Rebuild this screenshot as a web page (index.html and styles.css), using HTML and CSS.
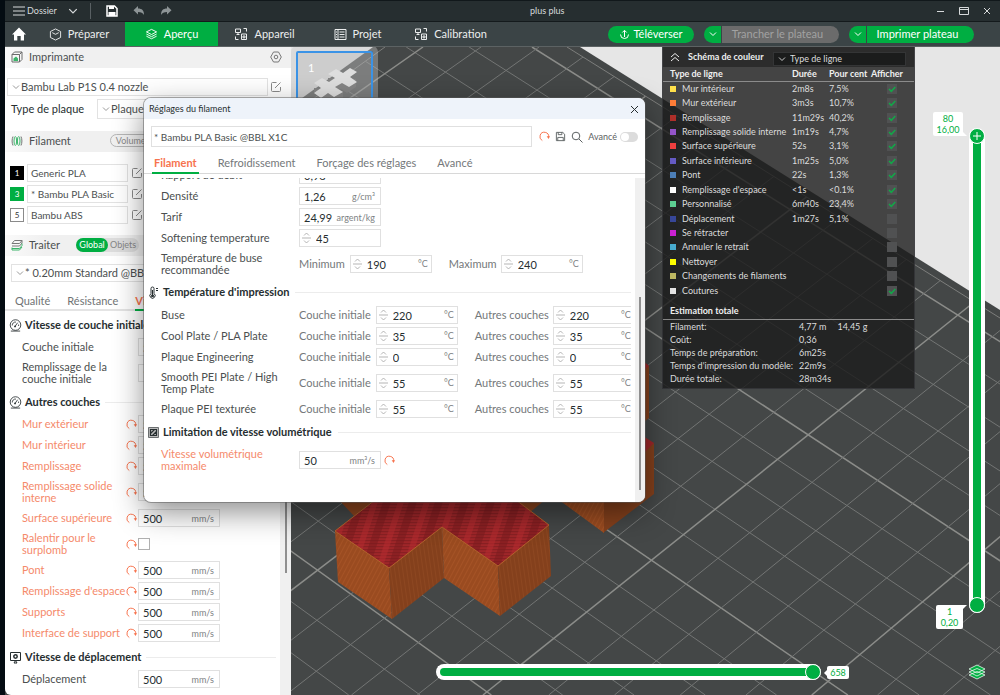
FILE: index.html
```html
<!DOCTYPE html>
<html lang="fr">
<head>
<meta charset="utf-8">
<meta name="viewport" content="width=device-width, initial-scale=1">
<title>plus plus</title>
<link rel="stylesheet" href="styles.css">
</head>
<body>
<svg class="defs" aria-hidden="true">
  <symbol id="chev" viewBox="0 0 8 8"><path d="M1 2.5 4 5.5 7 2.5" fill="none" stroke="currentColor"/></symbol>
  <symbol id="undo" viewBox="0 0 10 10"><path d="M3 8.700A4 4 0 1 1 8.800 5.500" fill="none" stroke="currentColor" stroke-width=".9"/><path d="M7 4.800h3L8.700 7.300z" fill="currentColor"/></symbol>
  <symbol id="edit" viewBox="0 0 12 12"><path d="M6.5 1.5H2.5a1 1 0 0 0-1 1v7a1 1 0 0 0 1 1h7a1 1 0 0 0 1-1V6M5 7l5.5-5.5" fill="none" stroke="currentColor"/></symbol>
  <symbol id="spin" viewBox="0 0 9 14"><path d="M2 4.500 4.500 2 7 4.500M2 9.500 4.500 12 7 9.500M0 7h9" fill="none" stroke="currentColor" stroke-width=".8"/></symbol>
  <symbol id="gauge" viewBox="0 0 14 14"><circle cx="7" cy="6.500" r="5.700" fill="none" stroke="currentColor" stroke-width=".9"/><path d="M6.500 8 9.300 4M3.500 7a3.500 3.500 0 0 1 4-3.700M10.300 6v1.500M2 13h10" fill="none" stroke="currentColor" stroke-width=".9"/><circle cx="6.500" cy="8" r="1" fill="currentColor"/></symbol>
  <symbol id="layers" viewBox="0 0 14 14"><path d="M7 1.500 12.500 4.200 7 7 1.500 4.200zM1.500 6.500 7 9.300l5.500-2.800M1.500 8.800 7 11.600l5.500-2.800" fill="none" stroke="currentColor"/></symbol>
  <symbol id="device" viewBox="0 0 14 14"><path d="M1.500 2h5v3.500h-5zM4 5.500V7.500M2.500 7.500h3M9.500 1.500h3v3M1.500 9.500v3h3M7.500 7h5v5.500h-5zM9 9h2v1.800H9z" fill="none" stroke="currentColor"/></symbol>
  <symbol id="disk" viewBox="0 0 12 12"><path d="M1.500 1.500h7l2 2v7h-9zM3.500 1.500v2.500h4V1.500M3 10.500V7h6v3.500" fill="none" stroke="currentColor"/></symbol>
</svg>

<div class="window">
  <header class="titlebar">
    <button class="menu-btn"><svg width="12" height="12" viewBox="0 0 12 12"><path d="M0 2h12M0 6h12M0 10h12" stroke="currentColor"/></svg>Dossier</button>
    <button class="icon-btn" aria-label="Menu"><svg width="10" height="10"><use href="#chev"/></svg></button>
    <span class="divider"></span>
    <button class="icon-btn save" aria-label="Enregistrer"><svg width="12" height="12" viewBox="0 0 12 12"><path d="M1 1h7.500L11 3.500V11H1z" fill="none" stroke="currentColor" stroke-width="1.500"/><path d="M3 1h5v3H3zM2.500 7h7v4h-7z" fill="currentColor"/></svg></button>
    <button class="icon-btn dim" aria-label="Annuler"><svg width="12" height="12" viewBox="0 0 12 12"><path d="M5 1v2.500c4 0 6 2 6 6.500C10 8 8 7 5 7v2.500L.5 5.200z" fill="currentColor"/></svg></button>
    <button class="icon-btn dim" aria-label="Rétablir"><svg width="12" height="12" viewBox="0 0 12 12"><path d="M7 1v2.500c-4 0-6 2-6 6.500C2 8 4 7 7 7v2.500l4.500-4.300z" fill="currentColor"/></svg></button>
    <h1 class="doc-title">plus plus</h1>
    <div class="win-btns">
      <button class="icon-btn" aria-label="Réduire"><svg width="10" height="10"><path d="M1 5.500h7" stroke="currentColor"/></svg></button>
      <button class="icon-btn" aria-label="Agrandir"><svg width="10" height="10"><path d="M.5 1.500h9v7h-9zM.5 3.500h9" fill="none" stroke="currentColor"/></svg></button>
      <button class="icon-btn" aria-label="Fermer"><svg width="10" height="10"><path d="M2 2l6 6M8 2 2 8" stroke="currentColor"/></svg></button>
    </div>
  </header>

  <nav class="mainnav">
    <button class="home" aria-label="Accueil"><svg width="14" height="14" viewBox="0 0 14 14"><path d="M7 .5 14 7.500h-2V13.500H8.700V9H5.300v4.500H2V7.500H0z" fill="#fff"/></svg></button>
    <button class="navtab"><svg width="13" height="13" viewBox="0 0 14 14"><path d="M7 1l5.500 2.800v6.400L7 13 1.500 10.200V3.800zM3.500 5 7 6.800 10.500 5" fill="none" stroke="currentColor"/></svg>Préparer</button>
    <button class="navtab active"><svg width="13" height="13"><use href="#layers"/></svg>Aperçu</button>
    <button class="navtab"><svg width="14" height="14"><use href="#device"/></svg>Appareil</button>
    <button class="navtab"><svg width="13" height="13" viewBox="0 0 13 13"><path d="M1 1.500h11v10H1zM4 1.500v10M5.500 4h5M5.500 6.500h5M5.500 9h5M2 4h1M2 6.500h1M2 9h1" fill="none" stroke="currentColor"/></svg>Projet</button>
    <button class="navtab"><svg width="14" height="14"><use href="#device"/></svg>Calibration</button>
    <div class="actions">
      <button class="pill"><svg width="11" height="11" viewBox="0 0 11 11"><path d="M5.500 8V1.500M3.300 3.500l2.200-2.200 2.200 2.200M1.500 5.500a4 4 0 0 0 8 0" fill="none" stroke="currentColor"/></svg>Téléverser</button>
      <div class="split">
        <button class="pill-l" aria-label="Options de tranchage"><svg width="8" height="8"><use href="#chev"/></svg></button>
        <button class="pill-r slice" disabled>Trancher le plateau</button>
      </div>
      <div class="split">
        <button class="pill-l" aria-label="Options d'impression"><svg width="8" height="8"><use href="#chev"/></svg></button>
        <button class="pill-r print">Imprimer plateau</button>
      </div>
    </div>
  </nav>

  <main class="main">
    <aside class="sidebar">
      <div class="band">
        <svg width="12" height="12" viewBox="0 0 12 12"><path d="M1 3.500 3.500 1H11v7.500L8.500 11H1zM1 3.500h7.500V11M8.500 3.500 11 1" fill="none" stroke="#6b6b6b"/><path d="M2.500 10V7.500L5 5.500l2 2V10z" fill="#3cb46a"/></svg>
        <h2>Imprimante</h2>
        <button class="gear" aria-label="Paramètres"><svg width="12" height="12" viewBox="0 0 12 12"><path d="M3.500 1h5L11.300 6 8.500 11h-5L.7 6z" fill="none" stroke="currentColor"/><circle cx="6" cy="6" r="1.800" fill="none" stroke="currentColor"/></svg></button>
      </div>
      <div class="printer">
        <div class="rowline">
          <div class="select"><svg width="8" height="8"><use href="#chev"/></svg><select aria-label="Imprimante"><option>Bambu Lab P1S 0.4 nozzle</option></select></div>
          <button class="edit" aria-label="Modifier l'imprimante"><svg width="12" height="12"><use href="#edit"/></svg></button>
        </div>
        <div class="rowline plate">
          <label for="plate">Type de plaque</label>
          <div class="select"><svg width="8" height="8"><use href="#chev"/></svg><select id="plate"><option>Plaque PEI texturée</option></select></div>
        </div>
      </div>
      <div class="band">
        <svg width="12" height="12" viewBox="0 0 12 12" fill="none"><path d="M2 1.500C.8 4 .8 8 2 10.500M10 1.500c1.200 2.500 1.200 6.500 0 9" stroke="#777"/><ellipse cx="4.300" cy="6" rx="1.300" ry="4.500" stroke="#3cb46a"/><ellipse cx="7.700" cy="6" rx="1.300" ry="4.500" stroke="#3cb46a"/></svg>
        <h2>Filament</h2>
        <button class="purge">Volumes de purge</button>
      </div>
      <ul class="filaments">
        <li><span class="slot black">1</span><button class="fname">Generic PLA</button><button class="edit" aria-label="Modifier Generic PLA"><svg width="12" height="12"><use href="#edit"/></svg></button></li>
        <li><span class="slot green">3</span><button class="fname">* Bambu PLA Basic</button><button class="edit" aria-label="Modifier Bambu PLA Basic"><svg width="12" height="12"><use href="#edit"/></svg></button></li>
        <li><span class="slot">5</span><button class="fname">Bambu ABS</button><button class="edit" aria-label="Modifier Bambu ABS"><svg width="12" height="12"><use href="#edit"/></svg></button></li>
      </ul>
      <div class="band">
        <svg width="12" height="12" viewBox="0 0 12 12" fill="none"><path d="M3.500 1.500h7.500L8.500 4.500H1zM11 1.500v2.500L8.500 7H1" stroke="#777"/><path d="M11 4.500v2L8.500 9.500H1M1 8.500V11h7.500L11 8" stroke="#3cb46a"/></svg>
        <h2>Traiter</h2>
        <div class="scope"><button class="on">Global</button><button>Objets</button></div>
      </div>
      <div class="process">
        <div class="select"><svg width="8" height="8"><use href="#chev"/></svg><select aria-label="Traitement"><option>* 0.20mm Standard @BBL X1C</option></select></div>
      </div>
      <div class="ptabs"><button>Qualité</button><button>Résistance</button><button class="on">Vitesse</button></div>

      <div class="params">
        <section class="group">
          <h3><svg width="13" height="13"><use href="#gauge"/></svg>Vitesse de couche initiale</h3>
          <div class="prow"><label for="p1">Couche initiale</label><i></i><div class="field"><input id="p1" value="50"><span>mm/s</span></div></div>
          <div class="prow dbl"><label for="p2">Remplissage de la couche initiale</label><i></i><div class="field"><input id="p2" value="105"><span>mm/s</span></div></div>
        </section>
        <section class="group">
          <h3><svg width="13" height="13"><use href="#gauge"/></svg>Autres couches</h3>
          <div class="prow mod"><label for="p3">Mur extérieur</label><svg class="undo"><use href="#undo"/></svg><div class="field"><input id="p3" value="500"><span>mm/s</span></div></div>
          <div class="prow mod"><label for="p4">Mur intérieur</label><svg class="undo"><use href="#undo"/></svg><div class="field"><input id="p4" value="500"><span>mm/s</span></div></div>
          <div class="prow mod"><label for="p5">Remplissage</label><svg class="undo"><use href="#undo"/></svg><div class="field"><input id="p5" value="500"><span>mm/s</span></div></div>
          <div class="prow mod dbl"><label for="p6">Remplissage solide interne</label><svg class="undo"><use href="#undo"/></svg><div class="field"><input id="p6" value="500"><span>mm/s</span></div></div>
          <div class="prow mod"><label for="p7">Surface supérieure</label><svg class="undo"><use href="#undo"/></svg><div class="field"><input id="p7" value="500"><span>mm/s</span></div></div>
          <div class="prow mod dbl"><label for="p8">Ralentir pour le surplomb</label><svg class="undo"><use href="#undo"/></svg><input class="check" type="checkbox" id="p8"></div>
          <div class="prow mod"><label for="p9">Pont</label><svg class="undo"><use href="#undo"/></svg><div class="field"><input id="p9" value="500"><span>mm/s</span></div></div>
          <div class="prow mod"><label for="p10">Remplissage d'espace</label><svg class="undo"><use href="#undo"/></svg><div class="field"><input id="p10" value="500"><span>mm/s</span></div></div>
          <div class="prow mod"><label for="p11">Supports</label><svg class="undo"><use href="#undo"/></svg><div class="field"><input id="p11" value="500"><span>mm/s</span></div></div>
          <div class="prow mod"><label for="p12">Interface de support</label><svg class="undo"><use href="#undo"/></svg><div class="field"><input id="p12" value="500"><span>mm/s</span></div></div>
        </section>
        <section class="group">
          <h3><svg width="13" height="13" viewBox="0 0 13 13"><path d="M1.500 1.500h10v8h-10zM5 12l1.500-2.500L8 12z" fill="none" stroke="currentColor"/><circle cx="6.500" cy="5.500" r="1.700" fill="none" stroke="currentColor" stroke-width="1.500"/></svg>Vitesse de déplacement</h3>
          <div class="prow"><label for="p13">Déplacement</label><i></i><div class="field"><input id="p13" value="500"><span>mm/s</span></div></div>
        </section>
        <span class="thumb"></span>
      </div>
    </aside>

    <section class="viewport">
      <svg class="scene" viewBox="291 47 709 648" preserveAspectRatio="xMinYMin slice" aria-hidden="true">
        <defs>
          <clipPath id="inner"><path d="M385 47H567L1000 318V695H291V118z"/></clipPath>
          <pattern id="wallA" width="4" height="4" patternUnits="userSpaceOnUse" patternTransform="rotate(-62)"><rect width="4" height="4" fill="#9a4b20"/><rect width="4" height="1" fill="#a55326"/></pattern>
          <pattern id="wallB" width="4" height="4" patternUnits="userSpaceOnUse" patternTransform="rotate(82)"><rect width="4" height="4" fill="#84401c"/><rect width="4" height="1" fill="#8d4721"/></pattern>
          <pattern id="top" width="26" height="3" patternUnits="userSpaceOnUse" patternTransform="skewX(-18)"><rect width="26" height="3" fill="#9f2629"/><rect width="26" height="1" fill="#861f22"/><rect x="0" width="8" height="3" fill="#7c1b1e" opacity=".55"/><rect x="15" width="6" height="3" fill="#b32c2f" opacity=".6"/></pattern>
        </defs>
        <path d="M291 47H1000V695H291z" fill="#e6e6e6"/>
        <path d="M373 47H580L1000 310V695H291V106z" fill="#444747"/>
        <g id="grid" clip-path="url(#inner)"></g>
        <path d="M385 47 291 115M567 47 1000 318" stroke="#7d7e7c" fill="none"/>
        <path d="M640 360 649 366V418L640 425z" fill="#84401c"/><path d="M640 358 649 366 640 374z" fill="#9f2629"/>
        <path d="M640 455 654 443V494L603 533V490z" fill="#84401c"/><path d="M640 434 654 443 640 457z" fill="#9f2629"/>
        <path d="M559 500H604V533z" fill="url(#wallA)"/>
        <path d="M339 500H374L354 516zM517 500H545L529 513z" fill="#8a441e"/>
        <path d="M335 531 389 568 392 619 338 582z" fill="url(#wallA)"/>
        <path d="M389 568 442 527 444 578 392 619z" fill="url(#wallB)"/>
        <path d="M442 527 498 566 500 616 444 578z" fill="url(#wallA)"/>
        <path d="M498 566 549 525 551 576 500 616z" fill="url(#wallB)"/>
        <path d="M335 531 375 500H516L549 525 498 566 442 527 389 568z" fill="url(#top)" stroke="#b5622a"/>
      </svg>

      <button class="plate-thumb" aria-label="Plateau 1">
        <span>1</span>
        <svg width="76" height="60" viewBox="0 0 76 60"><g id="pp"><path d="M30 27v5l7 5v4l6-3 6 4 9-6v-8z" fill="#858585"/><path d="M16 37v5l7 5v6l7-4 6 5 9-6v-8z" fill="#858585"/></g><path d="M30 23 38 18 45 22 52 17 59 21 52 26 59 31 51 36 44 32 37 36 45 41 36 46 30 42 23 47 16 42 23 37 16 32 24 27 31 31 37 27z" fill="#dedede"/></svg>
      </button>

      <div class="legend">
        <div class="lg-head">
          <svg width="10" height="10" viewBox="0 0 10 10"><path d="M1 5 5 1.500 9 5M1 9 5 5.500 9 9" fill="none" stroke="currentColor"/></svg>
          <label for="scheme">Schéma de couleur</label>
          <div class="select dark"><svg width="8" height="8"><use href="#chev"/></svg><select id="scheme"><option>Type de ligne</option></select></div>
        </div>
        <table class="lines">
          <thead><tr><th>Type de ligne</th><th>Durée</th><th>Pour cent</th><th>Afficher</th></tr></thead>
          <tbody id="lines"></tbody>
        </table>
        <h3>Estimation totale</h3>
        <dl class="totals">
          <dt>Filament:</dt><dd>4,77 m<span>14,45 g</span></dd>
          <dt>Coût:</dt><dd>0,36</dd>
          <dt>Temps de préparation:</dt><dd>6m25s</dd>
          <dt>Temps d'impression du modèle:</dt><dd>22m9s</dd>
          <dt>Durée totale:</dt><dd>28m34s</dd>
        </dl>
      </div>

      <div class="vslider">
        <div class="fill"></div>
        <input type="range" class="hi" min="1" max="80" value="80" aria-label="Couche supérieure">
        <input type="range" class="lo" min="1" max="80" value="1" aria-label="Couche inférieure">
        <svg class="plus" width="8" height="8" viewBox="0 0 8 8"><path d="M4 0v8M0 4h8" stroke="#fff"/></svg>
        <output class="tag tag-hi">80<br>16,00</output>
        <output class="tag tag-lo">1<br>0,20</output>
      </div>
      <div class="hslider">
        <input type="range" min="0" max="658" value="658" aria-label="Mouvement">
        <output class="tag">658</output>
      </div>
      <button class="layers-btn" aria-label="Couches"><svg width="18" height="16" viewBox="0 0 18 16"><path d="M1 11l8-3.500L17 11l-8 4zM1 8l8-3.500L17 8l-8 4zM1 5l8-4 8 4-8 4z" fill="#00ae42" stroke="#e8f7ed" stroke-width=".8"/></svg></button>
    </section>
  </main>
</div>

<div class="dialog" role="dialog" aria-labelledby="dlg-title">
  <header class="dlg-head"><h2 id="dlg-title">Réglages du filament</h2><button aria-label="Fermer"><svg width="9" height="9" viewBox="0 0 9 9"><path d="M1 1l7 7M8 1 1 8" stroke="currentColor"/></svg></button></header>
  <div class="dlg-bar">
    <input class="preset" aria-label="Profil" value="* Bambu PLA Basic @BBL X1C">
    <button class="orange" aria-label="Réinitialiser"><svg class="undo"><use href="#undo"/></svg></button>
    <button aria-label="Enregistrer"><svg width="11" height="11"><use href="#disk"/></svg></button>
    <button aria-label="Rechercher"><svg width="12" height="12" viewBox="0 0 12 12"><circle cx="5" cy="5" r="3.800" fill="none" stroke="currentColor"/><path d="M8 8l3.500 3.500" stroke="currentColor"/></svg></button>
    <label class="adv">Avancé<input class="toggle" type="checkbox"></label>
  </div>
  <div class="dlg-tabs"><button class="on">Filament</button><button>Refroidissement</button><button>Forçage des réglages</button><button>Avancé</button></div>
  <div class="dlg-scroll">
    <div class="dlg-body">
      <section class="dgroup">
        <div class="drow"><label for="d1">Rapport de débit</label><div class="field"><input id="d1" value="0,98"></div></div>
        <div class="drow"><label for="d2">Densité</label><div class="field"><input id="d2" value="1,26"><span>g/cm³</span></div></div>
        <div class="drow"><label for="d3">Tarif</label><div class="field"><input id="d3" value="24,99"><span>argent/kg</span></div></div>
        <div class="drow"><label for="d4">Softening temperature</label><div class="field"><svg class="spin"><use href="#spin"/></svg><input id="d4" value="45"></div></div>
        <div class="drow dbl"><span class="name">Température de buse recommandée</span><label class="sub" for="d5">Minimum</label><div class="field"><svg class="spin"><use href="#spin"/></svg><input id="d5" value="190"><span>°C</span></div><label class="sub" for="d6">Maximum</label><div class="field"><svg class="spin"><use href="#spin"/></svg><input id="d6" value="240"><span>°C</span></div></div>
      </section>
      <section class="dgroup">
        <h3><svg width="11" height="13" viewBox="0 0 11 13"><path d="M3 7.500V2.500a1.500 1.500 0 0 1 3 0v5a2.600 2.600 0 1 1-3 0zM8 2.500h2M8 4.500h2" fill="none" stroke="currentColor"/><path d="M4.500 4v5" stroke="currentColor"/><circle cx="4.500" cy="9.700" r="1.500" fill="currentColor"/></svg>Température d'impression</h3>
        <div class="drow"><span class="name">Buse</span><label class="sub" for="e1">Couche initiale</label><div class="field"><svg class="spin"><use href="#spin"/></svg><input id="e1" value="220"><span>°C</span></div><label class="sub" for="f1">Autres couches</label><div class="field"><svg class="spin"><use href="#spin"/></svg><input id="f1" value="220"><span>°C</span></div></div>
        <div class="drow"><span class="name">Cool Plate / PLA Plate</span><label class="sub" for="e2">Couche initiale</label><div class="field"><svg class="spin"><use href="#spin"/></svg><input id="e2" value="35"><span>°C</span></div><label class="sub" for="f2">Autres couches</label><div class="field"><svg class="spin"><use href="#spin"/></svg><input id="f2" value="35"><span>°C</span></div></div>
        <div class="drow"><span class="name">Plaque Engineering</span><label class="sub" for="e3">Couche initiale</label><div class="field"><svg class="spin"><use href="#spin"/></svg><input id="e3" value="0"><span>°C</span></div><label class="sub" for="f3">Autres couches</label><div class="field"><svg class="spin"><use href="#spin"/></svg><input id="f3" value="0"><span>°C</span></div></div>
        <div class="drow dbl"><span class="name">Smooth PEI Plate / High Temp Plate</span><label class="sub" for="e4">Couche initiale</label><div class="field"><svg class="spin"><use href="#spin"/></svg><input id="e4" value="55"><span>°C</span></div><label class="sub" for="f4">Autres couches</label><div class="field"><svg class="spin"><use href="#spin"/></svg><input id="f4" value="55"><span>°C</span></div></div>
        <div class="drow"><span class="name">Plaque PEI texturée</span><label class="sub" for="e5">Couche initiale</label><div class="field"><svg class="spin"><use href="#spin"/></svg><input id="e5" value="55"><span>°C</span></div><label class="sub" for="f5">Autres couches</label><div class="field"><svg class="spin"><use href="#spin"/></svg><input id="f5" value="55"><span>°C</span></div></div>
      </section>
      <section class="dgroup">
        <h3><svg width="11" height="11" viewBox="0 0 11 11"><path d="M.5.5h10v10H.5z" fill="#bbb" stroke="#6b6f70"/><path d="M2.500 2.500h6v6h-6zM2.500 6.500l4-4M4.500 8.500l4-4" fill="none" stroke="currentColor" stroke-width="1.200"/></svg>Limitation de vitesse volumétrique</h3>
        <div class="drow dbl mod"><label for="g1">Vitesse volumétrique maximale</label><div class="field"><input id="g1" value="50"><span>mm³/s</span></div><svg class="undo"><use href="#undo"/></svg></div>
      </section>
    </div>
    <div class="dlg-track"><span></span></div>
  </div>
</div>
<script src="app.js"></script>
</body>
</html>
```

FILE: styles.css
```css
* { box-sizing: border-box; }
html, body { height: 100%; }
body { margin: 0; background: #040c12; color: #4b4f50; font: 11px/12px Lato, "Liberation Sans", sans-serif; overflow: hidden; position: relative; }
button, input, select { font: inherit; color: inherit; }
button { border: 0; padding: 0; background: none; display: flex; align-items: center; }
h1, h2, h3, ul, dl, dd { margin: 0; padding: 0; font: inherit; list-style: none; }
svg { display: block; flex: none; }
.defs { position: absolute; width: 0; height: 0; }

.window { height: 100vh; padding-left: 5px; display: flex; flex-direction: column; }

/* Title bar */
.titlebar { height: 22px; flex: none; display: flex; align-items: center; background: #262e30; color: #d7dadb; border-top: 1px solid #11181b; border-bottom: 1px solid #141a1c; font-size: 9px; padding: 0 8px; }
.menu-btn { gap: 2px; width: 46px; margin-right: 9px; }
.titlebar .divider { width: 1px; height: 16px; background: #596063; margin: 0 15px 0 12px; }
.icon-btn.save { color: #fff; }
.icon-btn.dim { color: #8d9496; margin-left: 15px; }
.doc-title { flex: 1; padding-left: 358px; }
.win-btns { display: flex; gap: 13px; }

/* Main navigation */
.mainnav { height: 25px; flex: none; display: flex; background: #3b4446; color: #eceeee; border-bottom: 1px solid #5c6263; }
.home { width: 28px; justify-content: center; }
.navtab { width: 93px; justify-content: center; gap: 6px; }
.navtab:nth-child(2) { width: 92px; }
.navtab.active { background: #00ae42; color: #fff; }
.actions { flex: 1; display: flex; justify-content: flex-end; align-items: center; gap: 10px; padding-right: 26px; color: #fff; }
.pill { height: 17px; width: 86px; border-radius: 9px; background: #00ae42; justify-content: center; gap: 3px; }
.split { display: flex; gap: 1px; }
.pill-l { width: 17px; height: 17px; border-radius: 9px 0 0 9px; background: #00ae42; justify-content: center; }
.pill-r { height: 17px; border-radius: 0 9px 9px 0; background: #00ae42; justify-content: center; padding: 0 14px 0 8px; width: 107px; white-space: nowrap; }
.pill-r.slice { background: #6b6b6b; color: #a2a2a2; width: 117px; }

/* Layout */
.main { flex: 1; min-height: 0; display: flex; background: #444747; }
.sidebar { width: 286px; flex: none; background: #fff; display: flex; flex-direction: column; overflow: hidden; border-radius: 0 0 0 6px; }
.band { height: 21px; flex: none; background: linear-gradient(90deg, #fafafa, #f0f0f0 40px); display: flex; align-items: center; gap: 6px; padding: 0 9px 2px 6px; }
.gear { margin-left: auto; color: #777; }
.select { display: flex; align-items: center; border: 1px solid #e2e2e2; height: 18px; padding-left: 4px; background: #fff; color: #4b4f50; }
.select svg { color: #9a9a9a; }
.select select { appearance: none; border: 0; background: none; outline: 0; flex: 1; min-width: 0; padding: 0 1px; height: 16px; }
.printer { padding: 10px 9px 12px 2px; display: flex; flex-direction: column; gap: 3px; }
.rowline { display: flex; align-items: center; gap: 2px; }
.rowline .select { flex: 1; }
.edit { color: #8a8a8a; width: 12px; }
.plate label { width: 88px; padding-left: 4px; color: #262e30; }
.plate { padding-right: 13px; }
.plate .select { height: 20px; }
.purge { margin-left: 33px; border: 1px solid #b5b5b5; border-radius: 7px; height: 13px; padding: 0 5px; font-size: 9px; color: #8a8a8a; white-space: nowrap; }
.filaments { padding: 12px 5px 11px; display: flex; flex-direction: column; gap: 3px; font-size: 10px; }
.filaments li { display: flex; align-items: center; gap: 3px; }
.slot { width: 14px; height: 14px; border: 1px solid #8a8a8a; font-size: 8px; line-height: 12px; text-align: center; color: #333; }
.slot.black { background: #000; border-color: #000; color: #fff; }
.slot.green { background: #00ae42; border-color: #00ae42; color: #fff; }
.fname { width: 101px; height: 18px; border: 1px solid #e2e2e2; padding: 0 3px; white-space: nowrap; }
.scope { margin-left: 10px; display: flex; background: #dcdcdc; border-radius: 7px; height: 14px; font-size: 9px; color: #858585; width: 63px; }
.scope button { padding: 0 2px; }
.scope .on { background: #00ae42; color: #fff; border-radius: 7px; padding: 0 3px; width: 32px; justify-content: center; }
.process { padding: 8px 18px 0 6px; }
.ptabs { display: flex; gap: 17px; padding: 10px 10px 0; height: 29px; flex: none; border-bottom: 2px solid #e4e4e4; color: #6f7374; }
.ptabs button { height: 19px; border-bottom: 2px solid transparent; }
.ptabs .on { color: #f7734e; font-weight: 700; border-color: #00ae42; }

/* Parameter rows */
.params { flex: 1; min-height: 0; position: relative; padding: 6px 15px 0 4px; display: flex; flex-direction: column; gap: 7px; }
.params::after { content: ""; position: absolute; right: 0; top: 0; bottom: 0; width: 11px; background: #f0f0f0; }
.thumb { position: absolute; z-index: 1; right: 4px; top: 20px; height: 242px; width: 2px; background: #8f8f8f; }
.group, .dgroup { display: flex; flex-direction: column; gap: 3px; }
.group h3, .dgroup h3 { display: flex; align-items: center; gap: 3px; height: 16px; margin-bottom: 2px; color: #262e30; font-weight: 700; white-space: nowrap; }
.group h3::after, .dgroup h3::after { content: ""; flex: 1; height: 1px; background: #ececec; margin-left: 2px; }
.prow { display: flex; align-items: center; min-height: 18px; padding-left: 13px; }
.prow label { width: 104px; white-space: nowrap; }
.prow.dbl, .drow.dbl { min-height: 28px; }
.prow.dbl label, .drow.dbl label:first-child, .drow.dbl .name { white-space: normal; }
.prow i { width: 12px; }
.undo { width: 11px; height: 11px; color: #f7734e; }
.prow .undo { margin-right: 1px; }
.mod > label:first-child { color: #f58a6b; }
.field { display: flex; align-items: center; width: 82px; height: 18px; flex: none; border: 1px solid #e0e0e0; background: #fff; padding: 0 5px 0 4px; color: #262e30; }
.field input { flex: 1; min-width: 0; width: 0; border: 0; padding: 0; outline: 0; background: none; height: 16px; }
.field span { font-size: 9px; color: #7e8284; padding-top: 2px; }
.spin ~ span { padding-top: 0; }
.check { appearance: none; margin: 0; width: 12px; height: 12px; border: 1px solid #b0b0b0; background: #fff; }

/* 3D view */
.viewport { flex: 1; min-width: 0; position: relative; overflow: hidden; }
.scene { position: absolute; inset: 0; width: 100%; height: 100%; }
.scene .thin { stroke: #737574; stroke-width: 1; }
.scene .thick { stroke: #8b8c89; stroke-width: 1.5; }
.plate-thumb { position: absolute; left: 5px; top: 4px; width: 77px; height: 60px; border: 2px solid #3b93e6; border-radius: 2px; background: rgba(180, 180, 180, .5); overflow: hidden; box-shadow: 0 0 0 5px rgba(200, 200, 200, .4); }
.plate-thumb span { position: absolute; left: 10px; top: 9px; color: #fff; }

.legend { position: absolute; top: 0; right: 85px; width: 253px; background: rgba(27, 28, 28, .8); color: #dcdcdc; font-size: 9px; line-height: 12px; border: 1px solid rgba(70, 70, 75, .5); border-top: 0; padding-bottom: 2px; }
.lg-head { display: flex; align-items: center; height: 20px; background: rgba(20, 20, 20, .5); padding: 0 8px 0 7px; color: #eee; }
.lg-head label { margin: 0 0 0 8px; width: 85px; font-weight: 700; white-space: nowrap; }
.select.dark { flex: 1; height: 14px; background: #1b1c1c; border-color: #343536; color: #dcdcdc; margin-top: 4px; }
.select.dark svg { color: #ccc; }
.select.dark select { height: 12px; padding-left: 4px; }
.lines { border-collapse: collapse; width: 100%; height: 231px; table-layout: fixed; }
.lines th { font-weight: 700; text-align: left; color: #f0f0f0; padding: 0; height: 14px; border-bottom: 1px solid #8b8b8b; white-space: nowrap; }
.lines td { padding: 0; white-space: nowrap; }
.lines th:nth-child(1) { width: 129px; padding-left: 7px; }
.lines th:nth-child(2) { width: 37px; }
.lines th:nth-child(3) { width: 42px; }
.lines td:nth-child(1) { padding-left: 7px; }
.lines td:nth-child(4) { padding-left: 16px; }
.swatch { display: inline-block; width: 6px; height: 6px; margin-right: 6px; }
.check-cell { display: block; position: relative; width: 10px; height: 10px; }
.check-cell input { appearance: none; display: block; margin: 0; width: 10px; height: 10px; background: #505152; }
.check-cell svg { position: absolute; inset: 0; pointer-events: none; visibility: hidden; }
.check-cell input:checked + svg { visibility: visible; }
.legend h3 { font-weight: 700; color: #f0f0f0; padding: 7px 7px 2px; border-bottom: 1px solid #8b8b8b; }
.totals { display: grid; grid-template-columns: 129px 1fr; line-height: 13px; padding: 0 7px 1px; }
.totals dt { white-space: nowrap; }
.totals dd span { margin-left: 11px; }

/* Sliders */
.vslider { position: absolute; right: 15px; top: 81px; bottom: 82px; width: 16px; background: #fff; border-radius: 8px; }
.vslider .fill { position: absolute; left: 4px; right: 4px; top: 6px; bottom: 6px; background: #00ae42; }
.vslider input { appearance: none; position: absolute; inset: 0; width: 16px; height: 100%; margin: 0; background: none; writing-mode: vertical-lr; direction: rtl; pointer-events: none; }
.vslider input::-webkit-slider-thumb { appearance: none; width: 16px; height: 16px; border-radius: 50%; border: 1px solid #fff; background: #00ae42; pointer-events: auto; }
.plus { position: absolute; left: 4px; top: 4px; pointer-events: none; }
.tag { background: #fff; color: #00ae42; font-size: 9px; line-height: 11px; text-align: center; padding: 1px 3px; border-radius: 2px; position: relative; }
.tag::after { content: ""; position: absolute; border: 4px solid transparent; }
.tag-hi, .tag-lo { position: absolute; right: 22px; width: 30px; height: 24px; }
.tag-hi { bottom: 100%; margin-bottom: -8px; }
.tag-hi::after { right: -4px; bottom: 0; border-bottom-color: #fff; }
.tag-lo { top: 100%; margin-top: -8px; width: 27px; }
.tag-lo::after { right: -4px; top: 0; border-top-color: #fff; }
.hslider { position: absolute; left: 145px; right: 151px; bottom: 15px; display: flex; align-items: center; gap: 6px; }
.hslider input { appearance: none; flex: 1; min-width: 0; height: 16px; margin: 0; border: 4px solid #fff; border-width: 4px 0 4px 4px; border-radius: 8px; background: #00ae42; }
.hslider input::-webkit-slider-runnable-track { height: 8px; }
.hslider input::-webkit-slider-thumb { appearance: none; width: 16px; height: 16px; margin-top: -4px; border-radius: 50%; border: 1px solid #fff; background: #00ae42; }
.hslider .tag::after { left: -7px; top: 3px; border-right-color: #fff; }
.hslider .tag { width: 22px; }
.layers-btn { position: absolute; right: 14px; bottom: 15px; }

/* Filament dialog */
.dialog { position: absolute; z-index: 5; left: 144px; top: 98px; width: 501px; background: #fff; border-radius: 7px; overflow: hidden; box-shadow: 0 0 0 1px rgba(90, 90, 90, .5), 0 10px 30px rgba(0, 0, 0, .45); }
.dlg-head { display: flex; justify-content: space-between; align-items: center; height: 21px; background: #eef3fa; padding: 1px 6px 0 5px; color: #262e30; font-size: 9px; }
.dlg-bar { display: flex; align-items: center; gap: 5px; padding: 7px 7px 0; color: #5b6061; }
.preset { flex: 1; min-width: 0; height: 21px; border: 1px solid #e0e0e0; padding: 0 2px; font-size: 10px; outline: 0; color: #4b4f50; }
.dlg-bar .orange { margin-left: 2px; }
.dlg-bar .adv { display: flex; align-items: center; gap: 3px; font-size: 9px; }
.toggle { appearance: none; margin: 0; width: 18px; height: 10px; border-radius: 5px; background: #dcdcdc; position: relative; }
.toggle::after { content: ""; position: absolute; left: 1px; top: 1px; width: 8px; height: 8px; border-radius: 50%; background: #fff; }
.dlg-tabs { display: flex; gap: 17px; height: 27px; padding: 7px 8px 0; border-bottom: 1px solid #d8d8d8; color: #74787a; }
.dlg-tabs button { height: 20px; border-bottom: 2px solid transparent; padding: 0 2px; }
.dlg-tabs .on { color: #f7734e; font-weight: 700; border-color: #00ae42; }
.dlg-scroll { display: flex; margin-top: 4px; height: 324px; overflow: hidden; }
.dlg-body { flex: 1; min-width: 0; overflow: hidden; margin-right: 4px; display: flex; flex-direction: column; gap: 6px; }
.dgroup:first-child { margin-top: -12px; }
.dgroup h3 { padding-left: 4px; margin-bottom: 3px; gap: 4px; }
.drow { display: flex; align-items: center; min-height: 18px; padding-left: 17px; white-space: nowrap; flex: none; }
.drow > label:first-child, .drow > .name { width: 138px; padding-right: 14px; flex: none; }
.drow .sub { color: #74787a; padding-right: 5px; flex: none; }
.drow .field + .sub { padding-left: 17px; padding-right: 4px; }
.drow .sub + .field { padding-right: 3px; }
.drow .undo { margin-left: 3px; }
.spin { width: 9px; height: 14px; color: #a2a2a2; margin: 0 5px 0 -2px; }
.dlg-track { width: 10px; background: #f0f0f0; padding: 119px 0 12px 4px; }
.dlg-track span { display: block; width: 2px; height: 100%; background: #8f8f8f; }
```

FILE: app.js
```js
const NS = "http://www.w3.org/2000/svg";
const grid = document.getElementById("grid");

// Both families of plate lines converge on a far horizon.
const HORIZON = -4800, TOP = 47, BOTTOM = 695;
const drawFamily = (vanishX, firstX, step, count) => {
  for (let i = 0; i < count; i++) {
    const x = firstX + step * i;
    const line = document.createElementNS(NS, "line");
    line.setAttribute("x1", x);
    line.setAttribute("y1", TOP);
    line.setAttribute("x2", vanishX + (x - vanishX) * (BOTTOM - HORIZON) / (TOP - HORIZON));
    line.setAttribute("y2", BOTTOM);
    line.setAttribute("class", i % 5 ? "thin" : "thick");
    grid.append(line);
  }
};
drawFamily(-7165, 532, -62.9, 19);
drawFamily(7352, 423, 58, 24);

const lines = [
  ["#ffe04a", "Mur intérieur", "2m8s", "7,5%", true],
  ["#ff7d38", "Mur extérieur", "3m3s", "10,7%", true],
  ["#b0302a", "Remplissage", "11m29s", "40,2%", true],
  ["#9656cc", "Remplissage solide interne", "1m19s", "4,7%", true],
  ["#f04040", "Surface supérieure", "52s", "3,1%", true],
  ["#665cc7", "Surface inférieure", "1m25s", "5,0%", true],
  ["#4d80ba", "Pont", "22s", "1,3%", true],
  ["#ffffff", "Remplissage d'espace", "<1s", "<0.1%", true],
  ["#5ed194", "Personnalisé", "6m40s", "23,4%", true],
  ["#38489b", "Déplacement", "1m27s", "5,1%", false],
  ["#cd22d6", "Se rétracter", "", "", false],
  ["#49add1", "Annuler le retrait", "", "", false],
  ["#ffff00", "Nettoyer", "", "", false],
  ["#c0ba64", "Changements de filaments", "", "", false],
  ["#e6e6e6", "Coutures", "", "", true]
];
const body = document.getElementById("lines");
for (const [color, name, time, share, shown] of lines) {
  const row = body.insertRow();
  const swatch = document.createElement("span");
  swatch.className = "swatch";
  swatch.style.background = color;
  row.insertCell().append(swatch, name);
  row.insertCell().textContent = time;
  row.insertCell().textContent = share;
  const cell = document.createElement("span");
  cell.className = "check-cell";
  cell.innerHTML = '<input type="checkbox"><svg width="10" height="10" viewBox="0 0 10 10"><path d="M2 5l2.300 2.300L8.300 3" fill="none" stroke="#12a848" stroke-width="1.500"/></svg>';
  const box = cell.firstChild;
  box.checked = shown;
  box.setAttribute("aria-label", name);
  row.insertCell().append(cell);
}
```
